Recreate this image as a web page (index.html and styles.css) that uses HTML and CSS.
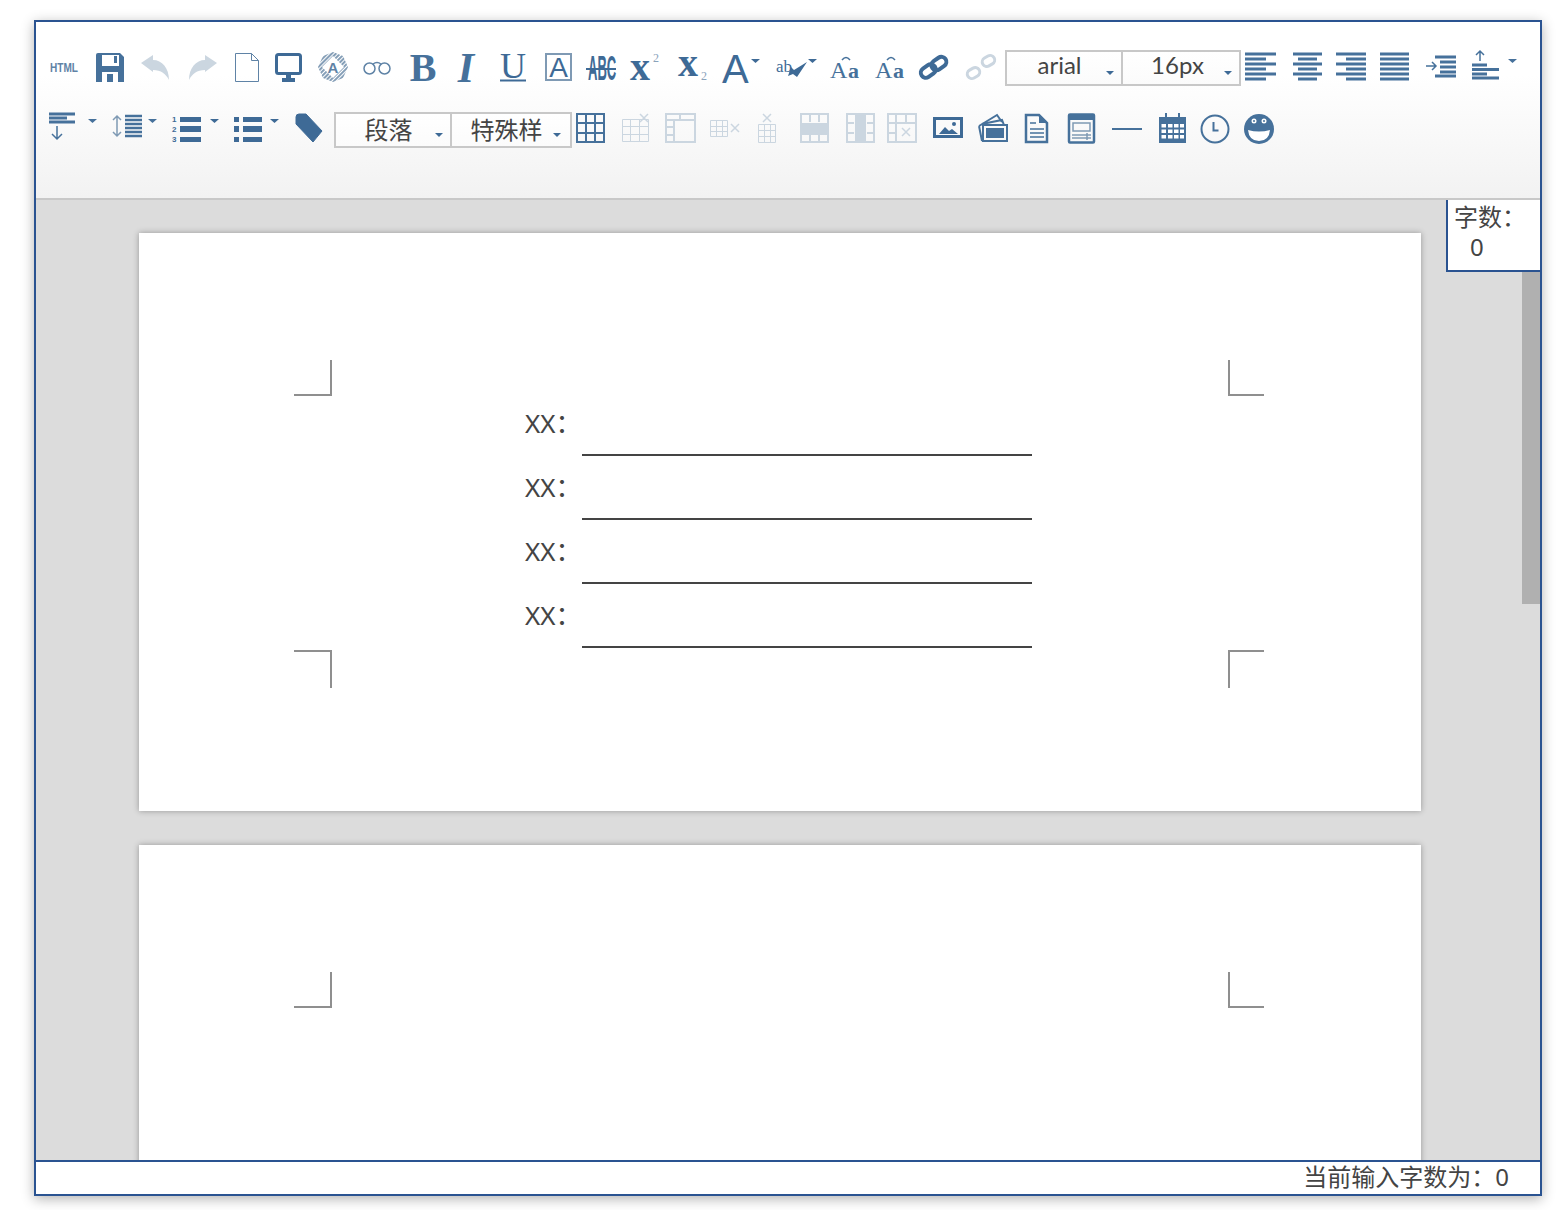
FILE: index.html
```html
<!DOCTYPE html>
<html lang="zh-CN">
<head>
    <meta charset="UTF-8">
    <title>编辑器</title>
    <link rel="stylesheet" href="styles.css">
</head>
<body>
    <div class="editor">
        <!-- Toolbar -->
        <div class="toolbar">
            <div class="tool-row">
                <svg class="ic soft" width="46" height="36"><text class="t-sans" x="1" y="23" font-size="12" font-weight="700" textLength="28" lengthAdjust="spacingAndGlyphs">HTML</text></svg>
                <svg class="ic dim" width="46" height="36"><path d="M1 6q0-2 2-2h22l4 4v25H1z"/><path class="w" d="M7 6h17v11H7zM7 23h16v10H7z"/><path d="M19 7h3v7h-3zM12 25h6v8h-6z"/></svg>
                <svg class="ic off" width="46" height="36"><path d="M0 14 12 6v5c9 0 16 8 16 20-3-6-8-10-16-10v2z"/></svg>
                <svg class="ic off" width="44" height="36"><path d="M30 14 18 6v5C9 11 2 19 2 31c3-6 8-10 16-10v2z"/></svg>
                <svg class="ic soft" width="42" height="36"><path class="ln" d="M4.500 4.500h16l7 7v21h-23zM20.500 4.500v7h7"/></svg>
                <svg class="ic" width="45" height="36"><rect class="ln th3" x="3.500" y="5.500" width="24" height="19" rx="2"/><path d="M13 26h5v3h4v4H9v-4h4z"/></svg>
                <svg class="ic soft" width="44" height="36"><defs><pattern id="hatch" width="3" height="3" patternUnits="userSpaceOnUse" patternTransform="rotate(45)"><rect width="1.900" height="3" fill="#7f9ab4"/></pattern></defs><path fill="url(#hatch)" d="M15 3 25 7l5 11-5 11-10 4-10-4-5-11 5-11z"/><path class="w" d="M15 7 26 18 15 29 4 18z"/><text class="t-sans" x="15" y="24" font-size="15" font-weight="700" text-anchor="middle">A</text></svg>
                <svg class="ic soft" width="46" height="36"><circle class="ln th15" cx="7.500" cy="19.500" r="5.500"/><circle class="ln th15" cx="22.500" cy="19.500" r="5.500"/><path class="ln th15" d="M11 15q4-3 8 0"/></svg>
                <svg class="ic dim" width="43" height="36"><text class="t-serif" x="15" y="32" font-size="40" text-anchor="middle" font-weight="700">B</text></svg>
                <svg class="ic dim" width="47" height="36"><text class="t-serif" x="15" y="33" font-size="42" font-style="italic" text-anchor="middle" font-weight="700">I</text></svg>
                <svg class="ic" width="45" height="36"><text class="t-serif" x="15" y="29" font-size="36" text-anchor="middle">U</text><path d="M2 30.500h26v2H2z"/></svg>
                <svg class="ic" width="43" height="36"><rect class="ln th2 soft-line" x="3" y="5" width="25" height="26"/><text class="t-sans" x="15.500" y="28" font-size="28" text-anchor="middle">A</text></svg>
                <svg class="ic" width="44" height="36"><text class="t-sans" transform="translate(2 31) scale(.93 2.500)" font-size="14" font-weight="700">ABC</text><path d="M0 19h30v2H0z"/></svg>
                <svg class="ic" width="48" height="36"><text class="t-serif" x="0" y="31" font-size="40" font-weight="700">x</text><text class="t-serif soft" x="23" y="13" font-size="12">2</text></svg>
                <svg class="ic" width="48" height="36"><text class="t-serif" x="0" y="27" font-size="40" font-weight="700">x</text><text class="t-serif soft" x="23" y="31" font-size="12">2</text></svg>
                <svg class="ic" width="55" height="36"><text class="t-sans" x="-4" y="34" font-size="40">A</text><path d="M25 10h9l-4.500 4z"/></svg>
                <svg class="ic" width="49" height="36"><text class="t-serif" x="-5" y="23" font-size="17">ab</text><path d="M7 27l3-9 3 3 13-8-10 15-4-3z"/><path d="M27 10h9l-4.500 4z"/></svg>
                <svg class="ic dim" width="45" height="36"><text class="t-serif" x="0" y="29" font-size="24">A</text><text class="t-serif" x="18" y="29" font-size="22" font-weight="700">a</text><path class="ln th15" d="M12 11q4-5 8 0"/></svg>
                <svg class="ic dim" width="43" height="36"><text class="t-serif" x="0" y="29" font-size="24">A</text><text class="t-serif" x="18" y="29" font-size="22" font-weight="700">a</text><path class="ln th15" d="M12 11q4-5 8 0"/></svg>
                <svg class="ic" width="48" height="36"><g transform="rotate(-35 16 18)"><rect class="ln th4" x="1" y="13" width="16" height="10" rx="5"/><rect class="ln th4" x="14" y="13" width="16" height="10" rx="5"/></g></svg>
                <svg class="ic off" width="39" height="36"><g transform="rotate(-30 15 18)"><rect class="ln th3" x="-1" y="15" width="13" height="9" rx="4.500"/><rect class="ln th3" x="18" y="12" width="13" height="9" rx="4.500"/></g></svg>
                <div class="sel-group">
                    <div class="sel"><span class="sel-text latin">arial</span><i class="caret"></i></div>
                    <div class="sel"><span class="sel-text latin">16px</span><i class="caret"></i></div>
                </div>
                <svg class="ic dim" width="47" height="36"><path class="ln th3" d="M0 5h31M0 10h21M0 15h31M0 20h21M0 25h31M0 30h21"/></svg>
                <svg class="ic dim" width="44" height="36"><path class="ln th3" d="M1 5h29M6 10h19M1 15h29M6 20h19M1 25h29M6 30h19"/></svg>
                <svg class="ic dim" width="44" height="36"><path class="ln th3" d="M0 5h30M10 10h20M0 15h30M10 20h20M0 25h30M10 30h20"/></svg>
                <svg class="ic dim" width="46" height="36"><path class="ln th3" d="M0 5h29M0 10h29M0 15h29M0 20h29M0 25h29M0 30h29"/></svg>
                <svg class="ic dim" width="44" height="36"><path class="ln th3" d="M9 8h21M14 13h16M14 18h16M14 23h16M9 27h21"/><path class="ln th15" d="M0 17h10M6 13l4 4-4 4"/></svg>
                <svg class="ic dim" width="40" height="36"><path class="ln th15" d="M10 12V2M6 6l4-4 4 4"/><path class="ln th3" d="M2 16h15M2 20.500h27M2 25h15M2 29h27"/><path d="M38 10h9l-4.500 4z"/></svg>
            </div>
            <div class="tool-row">
                <svg class="ic dim" width="63" height="36"><path class="ln th3" d="M0 3h26M0 7h18M0 11h26"/><path class="ln th15" d="M8 15v13M3 23l5 5 5-5"/><path d="M39 8h9l-4.500 4z"/></svg>
                <svg class="ic dim" width="60" height="36"><path class="ln th15 soft-line" d="M5 5v20M1 9l4-4 4 4M1 21l4 4 4-4"/><path class="ln th25" d="M13 5h17M13 9h17M13 13h17M13 17h17M13 21h17M13 25h17"/><path d="M36 8h9l-4.500 4z"/></svg>
                <svg class="ic" width="62" height="36"><text class="t-sans" x="0" y="11" font-size="8" font-weight="700">1</text><text class="t-sans" x="0" y="21" font-size="8" font-weight="700">2</text><text class="t-sans" x="0" y="31" font-size="8" font-weight="700">3</text><path d="M8 6h21v5H8zM8 15h21v6H8zM8 26h21v5H8z"/><path d="M38 8h9l-4.500 4z"/></svg>
                <svg class="ic" width="59" height="36"><path d="M0 6h5v5H0zM0 15h5v6H0zM0 26h5v5H0zM9 6h19v5H9zM9 15h19v6H9zM9 26h19v5H9z"/><path d="M36 8h9l-4.500 4z"/></svg>
                <svg class="ic" width="41" height="36"><path class="tag" d="M3 6q0-3 3-3h7l16 17-9 11L3 13z"/></svg>
                <div class="sel-group">
                    <div class="sel"><span class="sel-text">段落</span><i class="caret"></i></div>
                    <div class="sel sel-wide"><span class="sel-text">特殊样</span><i class="caret"></i></div>
                </div>
                <svg class="ic dim" width="44" height="36"><path class="ln th2" d="M1 3h27v28H1zM1 12h27M1 22h27M10 3v28M19 3v28"/></svg>
                <svg class="ic off" width="45" height="36"><path class="ln" d="M2.500 8.500h26v22h-26zM2.500 15.500h26M2.500 23.500h26M10.500 8.500v22M19.500 8.500v22"/><path class="ln th15" d="M20 3l8 8M28 3l-8 8"/></svg>
                <svg class="ic off" width="45" height="36"><path class="ln th2" d="M1 3h29v28H1zM1 9h29M9 9v22M1 16h8M1 24h8M15 3v6"/></svg>
                <svg class="ic off" width="42" height="36"><path class="ln" d="M.500 9.500h17v16H.500zM.500 15.500h17M.500 20.500h17M6.500 9.500v16M12.500 9.500v16"/><path class="ln th15" d="M21 13l8 8M29 13l-8 8"/></svg>
                <svg class="ic off" width="48" height="36"><path class="ln" d="M6.500 13.500h17v18h-17zM6.500 19.500h17M6.500 25.500h17M12.500 13.500v18M18.500 13.500v18"/><path class="ln th15" d="M11 3l8 8M19 3l-8 8"/></svg>
                <svg class="ic off" width="45" height="36"><path class="ln th2" d="M1 3h27v28H1zM1 23h27M10 3v8M19 3v8M10 23v8M19 23v8"/><path d="M1 12h27v10H1z"/></svg>
                <svg class="ic off" width="41" height="36"><path class="ln th2" d="M2 3h27v28H2zM2 12h7M2 22h7M22 12h7M22 22h7"/><path d="M10 3h11v28H10z"/></svg>
                <svg class="ic off" width="47" height="36"><path class="ln th2" d="M2 3h28v28H2zM2 12h28M2 22h8M10 3v28M20 3v9"/><path class="ln th15" d="M16 17l8 8M24 17l-8 8"/></svg>
                <svg class="ic" width="44" height="36"><rect class="ln th3" x="1.500" y="7.500" width="27" height="18"/><path d="M6 23l6-7 4 4 3-2 6 5z"/><circle cx="21" cy="13" r="2"/></svg>
                <svg class="ic dim" width="46" height="36"><path class="ln th2" d="M2 15 20 4l5 7M2 15l3 15"/><path class="ln th2" d="M5 13l20-4 2 5"/><rect class="ln th2" x="6" y="14" width="24" height="16"/><path d="M9 17h18v10H9z"/></svg>
                <svg class="ic dim" width="43" height="36"><path class="ln th25" d="M3 4h13l8 8v19H3z"/><path d="M16 3l9 9h-9z"/><path class="ln th15" d="M7 12h6M7 18h14M7 22h14M7 26h14"/></svg>
                <svg class="ic dim" width="45" height="36"><rect class="ln th25" x="3" y="3.500" width="25" height="28" rx="1"/><path d="M3 3h25v6H3z"/><rect class="ln th15 soft-line" x="7" y="12" width="17" height="8"/><path class="ln th15 soft-line" d="M6 24h19M6 27h19M21 22v7"/></svg>
                <svg class="ic dim" width="46" height="36"><path d="M1 17h30v2H1z"/></svg>
                <svg class="ic dim" width="43" height="36"><path d="M2 6h27v26H2zM8 2h2v6H8zM21 2h2v6h-2z"/><path class="w" d="M4.500 13h4.500v3.500H4.500zM11 13h4.500v3.500H11zM17 13h4.500v3.500H17zM23 13h4v3.500h-4zM4.500 18.500h4.500v3.500H4.500zM11 18.500h4.500v3.500H11zM17 18.500h4.500v3.500H17zM23 18.500h4v3.500h-4zM4.500 24h4.500v3.500H4.500zM11 24h4.500v3.500H11zM17 24h4.500v3.500H17zM23 24h4v3.500h-4z"/></svg>
                <svg class="ic dim" width="44" height="36"><circle class="ln th2" cx="15" cy="18" r="13.500"/><path class="ln th2" d="M13.500 11v8.500h5"/></svg>
                <svg class="ic dim" width="30" height="36"><circle cx="15" cy="18" r="15"/><path class="w" d="M4 19q11 3 22 0-1 11-11 11T4 19z"/><circle class="w" cx="10" cy="10" r="2.500"/><circle class="w" cx="20" cy="10" r="2.500"/><circle cx="10" cy="10" r="1"/><circle cx="20" cy="10" r="1"/></svg>
            </div>
        </div>

        <!-- Document canvas -->
        <div class="canvas">
            <div class="page">
                <div class="page-body">
                    <i class="mark tl"></i><i class="mark tr"></i><i class="mark bl"></i><i class="mark br"></i>
                    <div class="form">
                        <div class="form-row"><span class="form-label">XX：</span><span class="form-line"></span></div>
                        <div class="form-row"><span class="form-label">XX：</span><span class="form-line"></span></div>
                        <div class="form-row"><span class="form-label">XX：</span><span class="form-line"></span></div>
                        <div class="form-row"><span class="form-label">XX：</span><span class="form-line"></span></div>
                    </div>
                </div>
            </div>
            <div class="page">
                <div class="page-body">
                    <i class="mark tl"></i><i class="mark tr"></i><i class="mark bl"></i><i class="mark br"></i>
                </div>
            </div>
            <div class="scroll-thumb"></div>
            <div class="word-box">
                <div>字数：</div>
                <div class="word-num">0</div>
            </div>
        </div>

        <!-- Status bar -->
        <div class="status">当前输入字数为：0</div>
    </div>
</body>
</html>
```

FILE: styles.css
```css
body {
    margin: 0;
    padding: 20px 24px 14px 34px;
    background: #fff;
    font-family: "Noto Sans", "Noto Sans CJK SC", sans-serif;
    color: #444;
}

.editor {
    width: 1504px;
    height: 1172px;
    border: 2px solid #2a5391;
    box-shadow: 0 3px 12px rgba(0, 0, 0, 0.3);
    display: flex;
    flex-direction: column;
}

/* Toolbar */
.toolbar {
    height: 178px;
    box-sizing: border-box;
    padding: 27px 0 0 13px;
    background: linear-gradient(#fff 30%, #f2f2f2 100%);
    border-bottom: 2px solid #c8c8c8;
    display: flex;
    flex-direction: column;
    gap: 26px;
    flex: none;
}

.tool-row {
    display: flex;
    height: 36px;
}

.ic {
    flex: none;
    overflow: visible;
    color: #3e6a96;
    fill: currentColor;
}

.ic.soft { color: #5f83a6; }
.ic.dim { color: #46719b; }
.ic.off { color: #cbd6e0; }
text.soft { fill: #8aa3bb; }

.ic .ln {
    fill: none;
    stroke: currentColor;
    stroke-width: 1;
}

.ic .th15 { stroke-width: 1.5; }
.ic .th2 { stroke-width: 2; }
.ic .th25 { stroke-width: 2.5; }
.ic .th3 { stroke-width: 3; }
.ic .th4 { stroke-width: 4; }
.ic .soft-line { stroke: #7f9ab4; }
.ic .w { fill: #fff; }
.ic .tag { stroke: currentColor; stroke-width: 1; stroke-linejoin: round; }

.t-sans { font-family: "Liberation Sans", sans-serif; }
.t-serif { font-family: "Liberation Serif", serif; }

/* Dropdowns */
.sel-group {
    display: flex;
    flex: none;
    height: 36px;
    margin: 1px 4px 0 0;
}

.sel {
    width: 118px;
    box-sizing: border-box;
    border: 2px solid #c8c8c8;
    background: linear-gradient(#fff, #fbfbfb);
    display: flex;
    align-items: center;
    padding: 0 7px 0 6px;
    font-family: Lato, "Noto Sans CJK SC", sans-serif;
    font-size: 24px;
    color: #444;
}

.sel + .sel {
    border-left: 0;
    padding-left: 8px;
}

.sel-wide {
    width: 120px;
    padding-right: 9px;
}

.sel-text {
    flex: 1;
    text-align: center;
    line-height: 30px;
}

.sel-text.latin {
    padding-bottom: 6px;
}

.caret {
    flex: none;
    margin-top: 9px;
    border-style: solid;
    border-width: 4px 4px 0;
    border-color: #3e6a96 transparent transparent;
}

/* Canvas and pages */
.canvas {
    position: relative;
    height: 960px;
    flex: none;
    box-sizing: border-box;
    padding: 33px 0 0 103px;
    background: #dcdcdc;
    overflow: hidden;
    display: flex;
    flex-direction: column;
    gap: 34px;
}

.page {
    width: 1282px;
    height: 578px;
    flex: none;
    box-sizing: border-box;
    padding: 163px 193px 0;
    background: #fff;
    box-shadow: 0 0 6px rgba(0, 0, 0, 0.32);
}

.page-body {
    position: relative;
    height: 254px;
}

/* Crop marks around the text area */
.mark {
    position: absolute;
    box-sizing: border-box;
    height: 36px;
    border: 0 solid #8f8f8f;
}

.mark.tl { right: 100%; bottom: 100%; width: 38px; border-width: 0 2px 2px 0; }
.mark.tr { left: 100%; bottom: 100%; width: 36px; border-width: 0 0 2px 2px; }
.mark.bl { right: 100%; top: 100%; width: 38px; height: 38px; border-width: 2px 2px 0 0; }
.mark.br { left: 100%; top: 100%; width: 36px; height: 38px; border-width: 2px 0 0 2px; }

.form {
    padding-left: 193px;
    display: grid;
    gap: 4px;
}

.form-row {
    display: flex;
    height: 60px;
}

.form-label {
    width: 57px;
    font-size: 26px;
    line-height: 54px;
}

.form-line {
    width: 450px;
    border-bottom: 2px solid #444;
}

/* Word count overlay */
.scroll-thumb {
    position: absolute;
    top: 0;
    right: 0;
    width: 18px;
    height: 404px;
    background: #b0b0b0;
}

.word-box {
    position: absolute;
    top: 0;
    right: 0;
    width: 92px;
    height: 68px;
    padding-top: 2px;
    background: #fff;
    border-left: 2px solid #2a5391;
    border-bottom: 2px solid #2a5391;
    font-size: 24px;
    line-height: 30px;
    text-indent: 6px;
}

.word-num {
    text-indent: 22px;
}

/* Status bar */
.status {
    flex: 1;
    border-top: 2px solid #2a5391;
    text-align: right;
    padding-right: 31px;
    font-size: 24px;
    line-height: 30px;
    background: #fff;
}
```
